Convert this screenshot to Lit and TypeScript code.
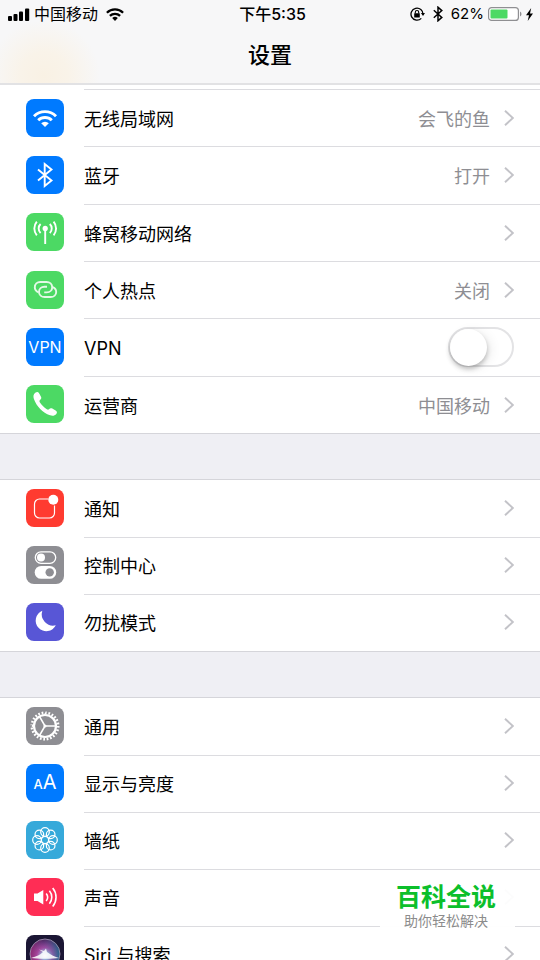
import { LitElement, html, svg, css, nothing, type TemplateResult, type SVGTemplateResult } from "lit";
import { customElement, property } from "lit/decorators.js";

const petals = [0, 45, 90, 135, 180, 225, 270, 315].map((deg) => {
  const a = (deg * Math.PI) / 180;
  return svg`<circle cx=${19 + 8 * Math.cos(a)} cy=${19 + 8 * Math.sin(a)} r="4.3"/>`;
});

const line = (width: number, body: SVGTemplateResult) =>
  svg`<g fill="none" stroke="#fff" stroke-width=${width} stroke-linejoin="round">${body}</g>`;

const glyphs: Record<string, SVGTemplateResult> = {
  wifi: svg`
    ${line(2.9, svg`<path d="M8 17.2a15.6 15.6 0 0 1 22 0"/><path d="M12.2 21.3a9.7 9.7 0 0 1 13.6 0"/>`)}
    <path fill="#fff" d="M15.2 24.2a5.5 5.5 0 0 1 7.6 0L19 28z"/>`,
  bluetooth: line(1.9, svg`<path d="M12 13.5L25.5 24.5L18.7 30V8L25.5 13.5L12 24.5" stroke-linejoin="miter"/>`),
  cellular: svg`
    ${line(1.9, svg`
      <path d="M19.2 15v16"/>
      <path d="M14.6 11a6.2 6.2 0 0 0 0 9M23.8 11a6.2 6.2 0 0 1 0 9"/>
      <path d="M10.8 8.7a10.6 10.6 0 0 0 0 13.6M27.6 8.7a10.6 10.6 0 0 1 0 13.6"/>`)}
    <circle cx="19.2" cy="15.4" r="2.6" fill="#fff"/>`,
  hotspot: line(1.9, svg`
    <path stroke="#e4f9e7" d="M12.6 21.3C10 20.3 8.8 18.3 8.8 16.3C8.8 13.2 11.2 11 14.3 11H20.5C23.8 11 26.2 13.2 26.2 16.2C26.2 19.2 23.8 21.4 20.8 21.4H18.2"/>
    <path stroke="#e4f9e7" d="M26.2 15.9C28.8 16.9 30.2 18.7 30.2 20.9C30.2 23.9 27.8 26 24.7 26H18.7C15.4 26 13 23.9 13 20.9C13 17.9 15.4 15.8 18.4 15.8H21"/>`),
  phone: svg`<path fill="#fff" d="M9.6 7.6C11 6.7 12.3 7 13.2 8.4L15 11.8C15.7 13.2 15.2 14.1 14 15C13.3 15.6 13.3 16.3 13.8 17.2C15.6 20 17.9 22.3 20.8 24.3C21.7 24.9 22.4 24.9 23 24.3C24 23.2 25 22.9 26.3 23.6L29.6 25.6C31.2 26.6 31.3 27.8 30.3 29C28.8 30.8 26.5 31.2 24.1 30.3C16.5 27.3 10.8 21.6 7.9 13.9C7 11.4 7.4 9.1 9.6 7.6Z"/>`,
  notice: svg`
    ${line(1.2, svg`<path d="M22.5 10H13.5A5 5 0 0 0 8.5 15V24A5 5 0 0 0 13.5 29H23.5A5 5 0 0 0 28.5 24V16.5"/>`)}
    <circle cx="27.3" cy="10.7" r="5" fill="#fff"/>`,
  control: svg`
    <rect x="9.3" y="5.9" width="20.4" height="11.4" rx="5.7" fill="none" stroke="#fff" stroke-width="1.3"/>
    <circle cx="15" cy="11.6" r="4" fill="#fff"/>
    <rect x="8.7" y="20" width="21.5" height="12.8" rx="6.4" fill="#fff"/>
    <circle cx="23.7" cy="26.4" r="4.2" fill="#8e8e93"/>`,
  moon: svg`<path fill="#fff" d="M16.3 7.8A10.6 10.6 0 1 0 29.8 22.3A11.4 11.4 0 0 1 16.3 7.8Z"/>`,
  gear: svg`
    <circle cx="19" cy="19" r="13.2" fill="none" stroke="#fff" stroke-width="2.6" pathLength="48" stroke-dasharray="1 1"/>
    <circle cx="19" cy="19" r="11" fill="none" stroke="#fff" stroke-width="2.2"/>
    ${line(1.5, svg`<path d="M19 19H30M19 19L13.5 9.5M19 19L13.5 28.5"/>`)}
    <circle cx="19" cy="19" r="1.6" fill="#fff"/>`,
  flower: line(1.2, svg`${petals}<circle cx="19" cy="19" r="3.6"/>`),
  sound: svg`
    <path fill="#fff" d="M8 15.5H11.5L17.3 12V26.5L11.5 23H8Z"/>
    ${line(1.6, svg`
      <path d="M20.2 15.5a6 6 0 0 1 0 7.5"/>
      <path d="M23.4 12.7a10 10 0 0 1 0 13"/>
      <path d="M26.7 10a14.5 14.5 0 0 1 0 18.5"/>`)}`,
  siri: svg`
    <defs>
      <radialGradient id="orb" cx="50%" cy="56%" r="55%">
        <stop offset="0" stop-color="#fff"/><stop offset=".2" stop-color="#8fd8ee"/>
        <stop offset=".5" stop-color="#8d479e"/><stop offset=".85" stop-color="#402a68"/>
        <stop offset="1" stop-color="#2b1d4c"/>
      </radialGradient>
      <linearGradient id="hue"><stop offset="0" stop-color="#d92d84"/><stop offset=".45" stop-color="#c650a5" stop-opacity=".4"/><stop offset="1" stop-color="#159bb0"/></linearGradient>
    </defs>
    <circle cx="19" cy="19" r="15" fill="url(#orb)"/>
    <circle cx="19" cy="19" r="15" fill="url(#hue)" opacity=".55"/>
    <circle cx="19" cy="19" r="15" fill="none" stroke="#a49bb8" stroke-width=".8"/>
    <path fill="#fff" opacity=".85" d="M5 23C11 21 14 20 17 17L13 14.5L18 16L20 13.5L21 17C25 20 29 22 33 23C27 24 11 24 5 23Z"/>`,
};

@customElement("app-tile")
export class AppTile extends LitElement {
  @property() name = "";
  static styles = css`
    :host { display: block; flex: none; }
    .tile {
      width: 38px; height: 38px; border-radius: 8px; overflow: hidden;
      display: grid; place-items: center;
      color: #fff; font: 16px/38px Inter, "Noto Sans CJK SC", sans-serif;
    }
    svg { display: block; width: 38px; height: 38px; }
    .wifi, .bluetooth, .vpn, .display { background: #007aff; }
    .cellular, .hotspot, .phone { background: #4cd964; }
    .notice { background: #ff3b30; }
    .control, .gear { background: #8e8e93; }
    .moon { background: #5856d6; }
    .flower { background: #36a9da; }
    .sound { background: #ff2d55; }
    .siri { background: #1b1634; }
    .letters { display: flex; align-items: baseline; line-height: 36px; height: 38px; }
    .small { font-size: 13px; font-weight: 500; }
    .large { font-size: 20px; }
  `;
  render() {
    const body =
      this.name === "vpn" ? html`<span>VPN</span>`
      : this.name === "display" ? html`<span class="letters"><span class="small">A</span><span class="large">A</span></span>`
      : html`<svg viewBox="0 0 38 38">${glyphs[this.name]}</svg>`;
    return html`<div class="tile ${this.name}" aria-hidden="true">${body}</div>`;
  }
}

interface Item { icon: string; label: string; value?: string; toggle?: boolean; }

const groups: { kind: string; items: Item[] }[] = [
  { kind: "network", items: [
    { icon: "wifi", label: "无线局域网", value: "会飞的鱼" },
    { icon: "bluetooth", label: "蓝牙", value: "打开" },
    { icon: "cellular", label: "蜂窝移动网络" },
    { icon: "hotspot", label: "个人热点", value: "关闭" },
    { icon: "vpn", label: "VPN", toggle: true },
    { icon: "phone", label: "运营商", value: "中国移动" },
  ] },
  { kind: "alerts", items: [
    { icon: "notice", label: "通知" },
    { icon: "control", label: "控制中心" },
    { icon: "moon", label: "勿扰模式" },
  ] },
  { kind: "general", items: [
    { icon: "gear", label: "通用" },
    { icon: "display", label: "显示与亮度" },
    { icon: "flower", label: "墙纸" },
    { icon: "sound", label: "声音" },
    { icon: "siri", label: "Siri 与搜索" },
  ] },
];

@customElement("app-root")
export class AppRoot extends LitElement {
  static styles = css`
    :host {
      display: flex; flex-direction: column; position: relative;
      height: 100vh; overflow: hidden; background: #fff; color: #000;
      font-family: Inter, "Noto Sans CJK SC", sans-serif; font-size: 18px;
    }
    * { box-sizing: border-box; }
    svg { display: block; flex: none; }
    header {
      flex: none; height: 85px; border-bottom: 2px solid #e2e2e4;
      background: radial-gradient(circle at 44px 76px, #f9f1e4 0, #f9f3e9 24px, #f7f7f800 56px), #f7f7f8;
    }
    .status {
      display: grid; grid-template-columns: 1fr auto 1fr; align-items: center;
      height: 28px; padding: 0 7px 0 8px; font-size: 16px; line-height: 28px;
    }
    .side { display: flex; align-items: center; }
    .carrier { margin: 0 8px 0 4px; }
    .time { font-weight: 500; padding-left: 4px; }
    .end { justify-content: flex-end; }
    .lock { margin-right: 8px; }
    .percent { margin: 0 4px 0 8px; font-size: 15px; }
    .bolt { margin-left: 4px; }
    h1 { margin: 0; font-size: 22px; font-weight: 500; line-height: 54px; text-align: center; }
    main { flex: none; padding-top: 4px; }
    .list { background: #efeff4; }
    ul { list-style: none; margin: 0; padding: 0; display: grid; grid-auto-rows: 1fr; background: #fff; }
    .network { min-height: 345px; }
    .alerts { min-height: 173px; }
    .general { min-height: 286px; }
    .alerts, .general { margin-top: 45px; border-top: 1px solid #d5d5da; }
    .alerts, .network { border-bottom: 1px solid #d5d5da; }
    .row {
      height: 100%; display: flex; align-items: center; padding: 0 26px;
      color: inherit; text-decoration: none;
    }
    .alerts .row, .general .row { padding-bottom: 2px; }
    .body {
      flex: 1; align-self: stretch; margin: 0 -26px 0 20px; padding-right: 26px;
      display: flex; align-items: center; border-top: 1px solid #dcdce0;
    }
    .alerts li:first-child .body, .general li:first-child .body { border-top-color: transparent; }
    .label, .value { line-height: 28px; padding-top: 4px; }
    .label { flex: 1; }
    .value { color: #8e8e93; margin-right: 14px; }
    .switch {
      appearance: none; margin: 0; width: 66px; height: 40px; border-radius: 20px;
      border: 2px solid #e3e3e5; background: #fff; display: flex; align-items: center;
    }
    .switch::before {
      content: ""; width: 37px; height: 37px; border-radius: 50%; background: #fff;
      box-shadow: 0 3px 5px #00000040, 4px 2px 12px #00000012;
    }
    .switch:checked { background: #4cd964; border-color: #4cd964; justify-content: flex-end; }
    .mark {
      position: absolute; right: 25px; bottom: 24px; width: 135px; padding: 2px 3px 6px 0;
      background: #fffffff2; text-align: center;
    }
    .mark strong { display: block; font-size: 25px; line-height: 30px; color: #0cbf2b; font-weight: 700; }
    .mark span { display: block; font-size: 14px; line-height: 18px; color: #8c8c8c; }
  `;

  private chevron = html`<svg width="10" height="16" viewBox="0 0 10 16" fill="none" stroke="#c3c3c8" stroke-width="1.9"><path d="M1 .8L8.8 8L1 15.2"/></svg>`;

  private row(item: Item): TemplateResult {
    if (item.toggle) {
      return html`<li><label class="row"><app-tile name=${item.icon}></app-tile>
        <span class="body"><span class="label">${item.label}</span><input class="switch" type="checkbox" role="switch"></span></label></li>`;
    }
    return html`<li><a class="row" href="#${item.icon}"><app-tile name=${item.icon}></app-tile>
      <span class="body"><span class="label">${item.label}</span>
      ${item.value ? html`<span class="value">${item.value}</span>` : nothing}${this.chevron}</span></a></li>`;
  }

  render() {
    return html`
      <header>
        <div class="status">
          <div class="side">
            <svg width="22" height="13" viewBox="0 0 22 13"><rect y="8" width="4" height="5" rx="1"/><rect x="5.5" y="6" width="4" height="7" rx="1"/><rect x="11" y="3.5" width="4" height="9.5" rx="1"/><rect x="17" y=".5" width="4.2" height="12.5" rx="1"/></svg>
            <span class="carrier">中国移动</span>
            <svg width="18" height="13" viewBox="0 0 18 13"><g fill="none" stroke="#000" stroke-width="2.3"><path d="M.9 4.7a11.6 11.6 0 0 1 16.2 0"/><path d="M3.9 7.9a7.3 7.3 0 0 1 10.2 0"/></g><path d="M6.2 10a4 4 0 0 1 5.6 0L9 12.9z"/></svg>
          </div>
          <span class="time">下午5:35</span>
          <div class="side end">
            <svg class="lock" width="15" height="14" viewBox="0 0 15 14" fill="none" stroke="#000"><path stroke-width="1.3" d="M11.3 11.4A6 6 0 1 1 13 7.5"/><path d="M10.9 6H15L13 8.9Z" fill="#000" stroke="none"/><rect x="4.2" y="6.3" width="5.6" height="4.2" rx=".5" fill="#000" stroke="none"/><path stroke-width="1.1" d="M5.3 6.5V5.2a1.7 1.7 0 0 1 3.4 0V6.5"/></svg>
            <svg width="10" height="16" viewBox="0 0 10 16" fill="none" stroke="#000" stroke-width="1.5"><path d="M.8 4.3L8.8 11.4L5 14.8V1.2L8.8 4.6L.8 11.7"/></svg>
            <span class="percent">62%</span>
            <svg width="34" height="14" viewBox="0 0 34 14"><rect x=".6" y=".6" width="29.8" height="12.8" rx="3" fill="#fff" stroke="#8f8f92" stroke-width="1.2"/><rect x="2.5" y="2.5" width="17" height="9" rx="1" fill="#4cd964"/><path d="M32 4.5a2.8 2.8 0 0 1 0 5z" fill="#8f8f92"/></svg>
            <svg class="bolt" width="7" height="13" viewBox="0 0 7 13"><path d="M5.2 0L0 7.3H3L1.7 13L7 5.4H4Z"/></svg>
          </div>
        </div>
        <h1>设置</h1>
      </header>
      <main>
        <div class="list">
          ${groups.map((g) => html`<ul class=${g.kind}>${g.items.map((i) => this.row(i))}</ul>`)}
        </div>
      </main>
      <div class="mark"><strong>百科全说</strong><span>助你轻松解决</span></div>`;
  }
}
